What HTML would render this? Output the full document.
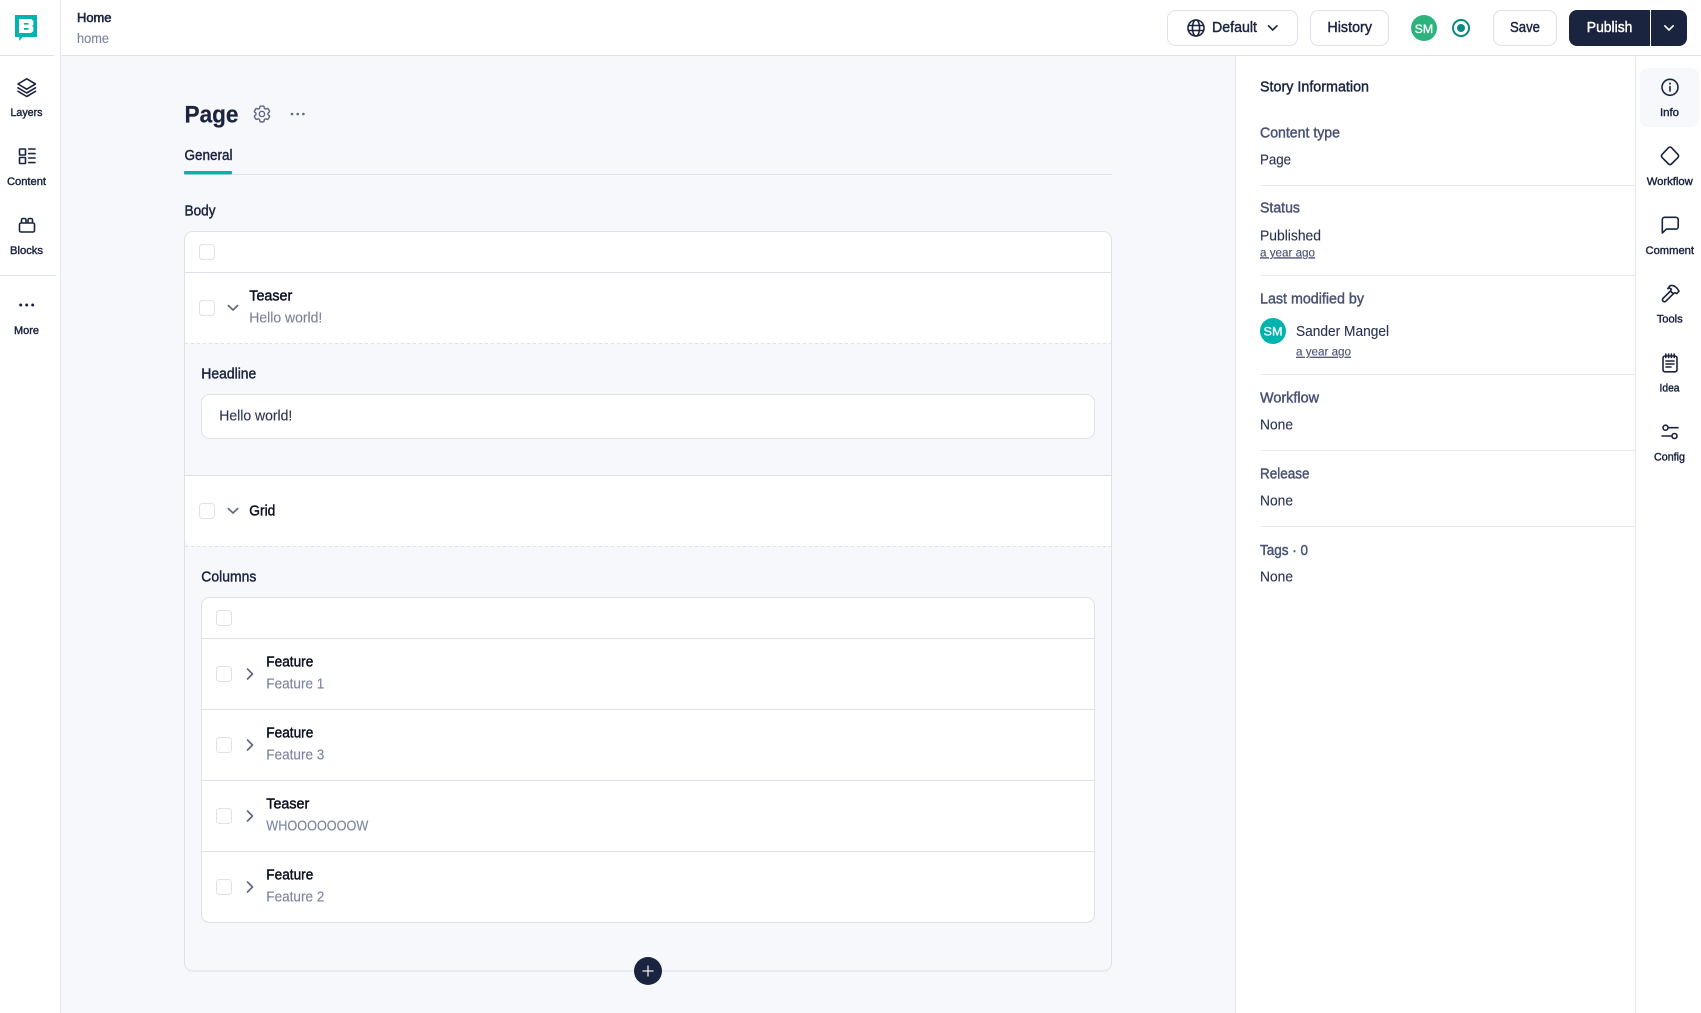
<!DOCTYPE html>
<html lang="en"><head><meta charset="utf-8"><title>Home</title>
<style>
html,body{margin:0;padding:0;background:#f7f8fc;overflow:hidden}
svg{display:block}
text{font-family:"Liberation Sans",Arial,sans-serif;font-size:14.4px;stroke-width:.12px}
.d{fill:#1b243f;stroke:#1b243f}
.k{fill:#0b0f1e;stroke:#0b0f1e}
.g{fill:#7c829c;stroke:#7c829c}
.t{fill:#4a5273;stroke:#4a5273}
.v{fill:#2b3350;stroke:#2b3350}
.w{fill:#fff;stroke:#fff}
.m{stroke-width:.42px}
.s{font-size:11.2px}
.u{font-size:12.2px;text-decoration:underline}
.i{fill:none;stroke:#1b243f;stroke-width:1.6;stroke-linecap:round;stroke-linejoin:round}
.c{fill:#fff;stroke:#dfe1ea;stroke-width:1}
.l{fill:none;stroke:#dfe1ea;stroke-width:1}
.h{fill:none;stroke:#5f6682;stroke-width:1.6;stroke-linecap:round;stroke-linejoin:round}
</style></head><body>
<svg xmlns="http://www.w3.org/2000/svg" width="1701" height="1013" viewBox="0 0 1701 1013">
<rect width="1701" height="1013" fill="#f7f8fc"/>
<!-- header -->
<rect width="1701" height="55" fill="#fff"/>
<!-- left rail -->
<rect width="60" height="1013" fill="#fff"/>
<path d="M60.5 0V1013" stroke="#e3e6f2" fill="none"/>
<path d="M61 55.5H1701" stroke="#dfe1ea" fill="none"/>
<path d="M0 55.5H54M0 275.5H56" stroke="#e2e3ea" fill="none"/>
<!-- right panels -->
<rect x="1236" y="56" width="465" height="957" fill="#fff"/>
<path d="M1235.5 56V1013M1635.5 56V1013" stroke="#e3e6f2" fill="none"/>
<rect x="1640" y="68" width="59" height="59" rx="8" fill="#f7f8fc"/>
<!-- logo -->
<path d="M15 15H37V37H22.5L19.2 41V37H15Z" fill="#00b3b0"/>
<path fill-rule="evenodd" d="M19 19H31L33.4 21V25L32 26L33.4 27.2V31L31 33H19ZM24 23V24.6H28.6V23ZM24 28V29.8H28.6V28Z" fill="#fff"/>
<text x="77" y="22" textLength="34.5" lengthAdjust="spacingAndGlyphs" class="d" style="font-size:13px;stroke-width:.6px">Home</text>
<text x="77" y="43" textLength="32" lengthAdjust="spacingAndGlyphs" class="g" style="font-size:13.4px">home</text>
<!-- left rail icons -->
<path class="i" d="M26.7 78.8L35.5 84L26.7 89.2L18 84ZM18 87.8L26.7 93L35.5 87.8M18 91.3L26.7 96.5L35.5 91.3"/>
<text x="10.5" y="116" textLength="32" lengthAdjust="spacingAndGlyphs" class="d m s">Layers</text>
<rect class="i" x="19.5" y="149" width="6" height="6" rx=".8"/><rect class="i" x="19.5" y="157.5" width="6" height="6" rx=".8"/>
<path class="i" d="M28.7 149H35M28.7 153.6H35M28.7 158H35M28.7 162.6H35"/>
<text x="7" y="185" textLength="39" lengthAdjust="spacingAndGlyphs" class="d m s">Content</text>
<path class="i" d="M19.5 224.5a1.5 1.5 0 0 1 1.5-1.5H33a1.5 1.5 0 0 1 1.5 1.5V230.5a1.5 1.5 0 0 1-1.5 1.5H21a1.5 1.5 0 0 1-1.5-1.5ZM21.5 223V220a1.5 1.5 0 0 1 1.5-1.5H24.5a1.5 1.5 0 0 1 1.5 1.5V223M28 223V220a1.5 1.5 0 0 1 1.5-1.5H31a1.5 1.5 0 0 1 1.5 1.5V223"/>
<text x="10" y="254" textLength="33" lengthAdjust="spacingAndGlyphs" class="d m s">Blocks</text>
<circle cx="20.7" cy="305" r="1.5" fill="#1b243f"/><circle cx="26.7" cy="305" r="1.5" fill="#1b243f"/><circle cx="32.7" cy="305" r="1.5" fill="#1b243f"/>
<text x="14" y="334" textLength="25" lengthAdjust="spacingAndGlyphs" class="d m s">More</text>
<!-- top right buttons -->
<rect class="c" x="1167.5" y="10.5" width="130" height="35" rx="8"/>
<g class="i"><circle cx="1196" cy="28" r="8"/><ellipse cx="1196" cy="28" rx="3.6" ry="8"/><path d="M1188.3 25.5H1203.7M1188.3 30.5H1203.7"/></g>
<text x="1212" y="32" textLength="45" lengthAdjust="spacingAndGlyphs" class="d m">Default</text>
<path class="i" d="M1268.5 25.8L1272.7 30L1277 25.8"/>
<rect class="c" x="1310.5" y="10.5" width="78" height="35" rx="8"/>
<text x="1327.4" y="32" textLength="44.6" lengthAdjust="spacingAndGlyphs" class="d m">History</text>
<circle cx="1424" cy="28" r="13" fill="#2db47d"/>
<text x="1414.7" y="33" textLength="18.5" lengthAdjust="spacingAndGlyphs" class="w" style="font-size:12px;stroke-width:.3px">SM</text>
<circle cx="1461" cy="28" r="8" fill="none" stroke="#0b8a80" stroke-width="2"/><circle cx="1461" cy="28" r="4" fill="#0b8a80"/>
<rect class="c" x="1493.5" y="10.5" width="63" height="35" rx="8"/>
<text x="1510" y="32" textLength="30" lengthAdjust="spacingAndGlyphs" class="d m">Save</text>
<rect x="1569" y="10" width="118" height="36" rx="8" fill="#1b243f"/>
<rect x="1650" y="10" width="1" height="36" fill="#fff"/>
<text x="1586.8" y="32" textLength="45.6" lengthAdjust="spacingAndGlyphs" class="w m">Publish</text>
<path d="M1664.8 25.8L1669 30L1673.2 25.8" fill="none" stroke="#fff" stroke-width="1.6" stroke-linecap="round" stroke-linejoin="round"/>
<!-- page title -->
<text x="184.5" y="122.7" textLength="54" lengthAdjust="spacingAndGlyphs" class="d" style="font-size:24.5px;font-weight:700;stroke-width:.2px">Page</text>
<g transform="translate(251.4 103.4) scale(.88)" class="h" style="stroke-width:1.6"><path d="M9.594 3.94c.09-.542.56-.94 1.11-.94h2.593c.55 0 1.02.398 1.11.94l.213 1.281c.063.374.313.686.645.87.074.04.147.083.22.127.325.196.72.257 1.075.124l1.217-.456a1.125 1.125 0 011.37.49l1.296 2.247a1.125 1.125 0 01-.26 1.431l-1.003.827c-.293.24-.438.613-.431.992a6.759 6.759 0 010 .255c-.007.378.138.75.43.99l1.005.828c.424.35.534.954.26 1.43l-1.298 2.247a1.125 1.125 0 01-1.369.491l-1.217-.456c-.355-.133-.75-.072-1.076.124a6.57 6.57 0 01-.22.128c-.331.183-.581.495-.644.869l-.213 1.28c-.09.543-.56.941-1.11.941h-2.594c-.55 0-1.02-.398-1.11-.94l-.213-1.281c-.062-.374-.312-.686-.644-.87a6.52 6.52 0 01-.22-.127c-.325-.196-.72-.257-1.076-.124l-1.217.456a1.125 1.125 0 01-1.369-.49l-1.297-2.247a1.125 1.125 0 01.26-1.431l1.004-.827c.292-.24.437-.613.43-.992a6.932 6.932 0 010-.255c.007-.378-.138-.75-.43-.99l-1.004-.828a1.125 1.125 0 01-.26-1.43l1.297-2.247a1.125 1.125 0 011.37-.491l1.216.456c.356.133.751.072 1.076-.124.072-.044.146-.087.22-.128.332-.183.582-.495.644-.869l.214-1.281z"/><path d="M15 12a3 3 0 11-6 0 3 3 0 016 0z"/></g>
<circle cx="292" cy="114" r="1.3" fill="#5f6682"/><circle cx="297.7" cy="114" r="1.3" fill="#5f6682"/><circle cx="303.4" cy="114" r="1.3" fill="#5f6682"/>
<text x="184.5" y="160" textLength="48" lengthAdjust="spacingAndGlyphs" class="d m">General</text>
<path d="M184 174.5H1112" stroke="#dfe1ea" fill="none"/>
<rect x="184" y="171" width="48" height="3.4" rx="1" fill="#00b3b0"/>
<text x="184.5" y="215.7" textLength="31" lengthAdjust="spacingAndGlyphs" class="d m">Body</text>
<!-- outer card -->
<rect x="184.5" y="231.5" width="927" height="739.5" rx="8" fill="#f7f8fc" stroke="#dfe1ea"/>
<path d="M185 343V240a8 8 0 0 1 8-8H1103a8 8 0 0 1 8 8V343Z" fill="#fff"/>
<path class="l" d="M185 272.5H1111"/>
<rect class="c" x="199.5" y="244.5" width="15" height="15" rx="3"/>
<rect class="c" x="199.5" y="300.5" width="15" height="15" rx="3"/>
<path class="h" d="M228.3 305.5L233 310L237.7 305.5"/>
<text x="249.3" y="300.7" textLength="43" lengthAdjust="spacingAndGlyphs" class="k m">Teaser</text>
<text x="249.3" y="322.7" textLength="73" lengthAdjust="spacingAndGlyphs" class="g">Hello world!</text>
<path d="M185 343.5H1111" stroke="#dfe1ea" stroke-dasharray="3 3" fill="none"/>
<text x="201.3" y="378.5" textLength="55" lengthAdjust="spacingAndGlyphs" class="d m">Headline</text>
<rect class="c" x="201.5" y="394.5" width="893" height="44" rx="8"/>
<text x="219.3" y="420.6" textLength="73" lengthAdjust="spacingAndGlyphs" class="v">Hello world!</text>
<path d="M185 475.5H1111V546H193a8 8 0 0 1-8-8Z" fill="#fff"/>
<path class="l" d="M185 475.5H1111"/>
<rect class="c" x="199.5" y="503.5" width="15" height="15" rx="3"/>
<path class="h" d="M228.3 508.5L233 513L237.7 508.5"/>
<text x="249.3" y="515.7" textLength="26" lengthAdjust="spacingAndGlyphs" class="k m">Grid</text>
<path d="M185 546.5H1111" stroke="#dfe1ea" stroke-dasharray="3 3" fill="none"/>
<text x="201.3" y="581.7" textLength="55" lengthAdjust="spacingAndGlyphs" class="d m">Columns</text>
<!-- inner card -->
<rect class="c" x="201.5" y="597.5" width="893" height="325" rx="8"/>
<path class="l" d="M202 638.5H1094M202 709.5H1094M202 780.5H1094M202 851.5H1094"/>
<rect class="c" x="216.5" y="610.5" width="15" height="15" rx="3"/>
<g id="r">
<rect class="c" x="216.5" y="666.5" width="15" height="15" rx="3"/>
<path class="h" d="M247.5 669L252.5 674L247.5 679"/>
<text x="266.3" y="666.7" textLength="47" lengthAdjust="spacingAndGlyphs" class="k m">Feature</text>
<text x="266.3" y="688.4" textLength="58" lengthAdjust="spacingAndGlyphs" class="g">Feature 1</text>
<rect class="c" x="216.5" y="737.5" width="15" height="15" rx="3"/>
<path class="h" d="M247.5 740L252.5 745L247.5 750"/>
<text x="266.3" y="737.7" textLength="47" lengthAdjust="spacingAndGlyphs" class="k m">Feature</text>
<text x="266.3" y="759.4" textLength="58" lengthAdjust="spacingAndGlyphs" class="g">Feature 3</text>
<rect class="c" x="216.5" y="808.5" width="15" height="15" rx="3"/>
<path class="h" d="M247.5 811L252.5 816L247.5 821"/>
<text x="266.3" y="808.7" textLength="43" lengthAdjust="spacingAndGlyphs" class="k m">Teaser</text>
<text x="266.3" y="830.4" textLength="102" lengthAdjust="spacingAndGlyphs" class="g">WHOOOOOOOW</text>
<rect class="c" x="216.5" y="879.5" width="15" height="15" rx="3"/>
<path class="h" d="M247.5 882L252.5 887L247.5 892"/>
<text x="266.3" y="879.7" textLength="47" lengthAdjust="spacingAndGlyphs" class="k m">Feature</text>
<text x="266.3" y="901.4" textLength="58" lengthAdjust="spacingAndGlyphs" class="g">Feature 2</text>
</g>
<circle cx="648" cy="971" r="14" fill="#1b243f"/>
<path d="M648 965.5V976.5M642.5 971H653.5" stroke="#e8e9ee" stroke-width="1.3" fill="none"/>
<!-- info panel -->
<text x="1260" y="91.6" textLength="109" lengthAdjust="spacingAndGlyphs" class="d m">Story Information</text>
<text x="1260" y="137.5" textLength="80" lengthAdjust="spacingAndGlyphs" class="t m">Content type</text>
<text x="1260" y="164.5" textLength="31" lengthAdjust="spacingAndGlyphs" class="v">Page</text>
<path d="M1260 185.5H1635M1260 275.5H1635M1260 374.5H1635M1260 450.5H1635M1260 526.5H1635" stroke="#e9eaef" fill="none"/>
<text x="1260" y="212.5" textLength="40" lengthAdjust="spacingAndGlyphs" class="t m">Status</text>
<text x="1260" y="240.4" textLength="61" lengthAdjust="spacingAndGlyphs" class="v">Published</text>
<text x="1260" y="256.3" textLength="55" lengthAdjust="spacingAndGlyphs" class="t u">a year ago</text>
<text x="1260" y="303.7" textLength="104" lengthAdjust="spacingAndGlyphs" class="t m">Last modified by</text>
<circle cx="1273" cy="331" r="13" fill="#00b3ad"/>
<text x="1263.5" y="335.5" textLength="19" lengthAdjust="spacingAndGlyphs" class="w" style="font-size:12px;stroke-width:.3px">SM</text>
<text x="1296" y="336" textLength="93" lengthAdjust="spacingAndGlyphs" class="v">Sander Mangel</text>
<text x="1296" y="355.7" textLength="55" lengthAdjust="spacingAndGlyphs" class="t u">a year ago</text>
<text x="1260" y="402.7" textLength="59" lengthAdjust="spacingAndGlyphs" class="t m">Workflow</text>
<text x="1260" y="429.6" textLength="33" lengthAdjust="spacingAndGlyphs" class="v">None</text>
<text x="1260" y="478.6" textLength="49.5" lengthAdjust="spacingAndGlyphs" class="t m">Release</text>
<text x="1260" y="505.6" textLength="33" lengthAdjust="spacingAndGlyphs" class="v">None</text>
<text x="1260" y="555" textLength="48" lengthAdjust="spacingAndGlyphs" class="t m">Tags · 0</text>
<text x="1260" y="581.6" textLength="33" lengthAdjust="spacingAndGlyphs" class="v">None</text>
<!-- right rail -->
<circle class="i" cx="1670" cy="87.3" r="8"/>
<path class="i" d="M1670 86.5V91" style="stroke-width:1.6"/><circle cx="1670" cy="83.6" r="1" fill="#1b243f"/>
<text x="1660" y="116" textLength="19" lengthAdjust="spacingAndGlyphs" class="d m s">Info</text>
<path class="i" d="M1668.6 147.6a2 2 0 0 1 2.8 0L1678 154.6a2 2 0 0 1 0 2.8L1671.4 164a2 2 0 0 1-2.8 0L1662 157.4a2 2 0 0 1 0-2.8Z"/>
<text x="1646.7" y="185" textLength="46" lengthAdjust="spacingAndGlyphs" class="d m s">Workflow</text>
<path class="i" d="M1662.3 233V219.7a2.4 2.4 0 0 1 2.4-2.4H1675.8a2.4 2.4 0 0 1 2.4 2.4V226.7a2.4 2.4 0 0 1-2.4 2.4H1666.4Z"/>
<text x="1645.5" y="254" textLength="48.5" lengthAdjust="spacingAndGlyphs" class="d m s">Comment</text>
<path class="i" d="M1670.5 291L1663 298.4a2 2 0 0 0 0 2.8a2 2 0 0 0 2.8 0L1673.3 293.8ZM1667.7 288.6L1670.2 285.6C1673.5 285 1676.8 287 1679 291.3L1676.7 293.6L1674.7 292.7L1673.3 293.8L1670.5 291L1671.4 289.2L1669.5 288Z"/>
<text x="1656.7" y="322.5" textLength="26" lengthAdjust="spacingAndGlyphs" class="d m s">Tools</text>
<rect class="i" x="1663" y="356" width="14" height="15.8" rx="2"/>
<path class="i" d="M1665.8 354V357.5M1668.6 354V357.5M1671.4 354V357.5M1674.2 354V357.5M1666 361H1674M1666 364H1674M1666 367H1671"/>
<text x="1659.5" y="391.7" textLength="20" lengthAdjust="spacingAndGlyphs" class="d m s">Idea</text>
<circle class="i" cx="1665.5" cy="427.7" r="2.5"/><circle class="i" cx="1674.5" cy="436" r="2.5"/>
<path class="i" d="M1668.5 427.7H1678M1662 436H1671.5"/>
<text x="1654" y="460.7" textLength="31" lengthAdjust="spacingAndGlyphs" class="d m s">Config</text>
</svg>
</body></html>
